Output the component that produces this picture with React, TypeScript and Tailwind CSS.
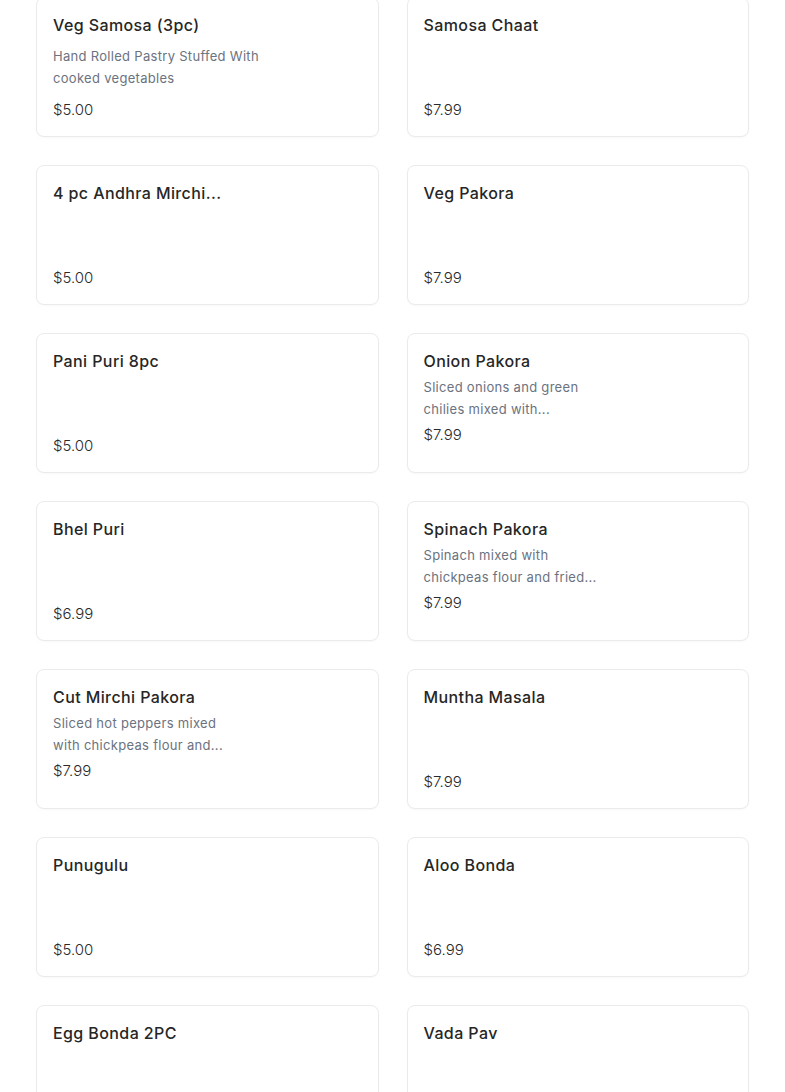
import React from "react";

type Item = {
  title: string;
  price: string;
  desc?: string[];
  kind?: "full" | "clamp";
};

const items: Item[] = [
  { title: "Veg Samosa (3pc)", price: "$5.00", desc: ["Hand Rolled Pastry Stuffed With", "cooked vegetables"], kind: "full" },
  { title: "Samosa Chaat", price: "$7.99" },
  { title: "4 pc Andhra Mirchi...", price: "$5.00" },
  { title: "Veg Pakora", price: "$7.99" },
  { title: "Pani Puri 8pc", price: "$5.00" },
  { title: "Onion Pakora", price: "$7.99", desc: ["Sliced onions and green", "chilies mixed with..."], kind: "clamp" },
  { title: "Bhel Puri", price: "$6.99" },
  { title: "Spinach Pakora", price: "$7.99", desc: ["Spinach mixed with", "chickpeas flour and fried..."], kind: "clamp" },
  { title: "Cut Mirchi Pakora", price: "$7.99", desc: ["Sliced hot peppers mixed", "with chickpeas flour and..."], kind: "clamp" },
  { title: "Muntha Masala", price: "$7.99" },
  { title: "Punugulu", price: "$5.00" },
  { title: "Aloo Bonda", price: "$6.99" },
  { title: "Egg Bonda 2PC", price: "$5.00" },
  { title: "Vada Pav", price: "$5.00" },
];

function Card({ item }: { item: Item }) {
  return (
    <div className="flex h-[140px] flex-col rounded-[8px] border border-[#ebebeb] bg-white px-[16px] pt-[15px] shadow-[0_1px_2px_rgba(0,0,0,0.03)]">
      <div className="text-[16px] font-medium leading-[24px] tracking-[0.4px] text-[#262626]">{item.title}</div>
      {item.desc ? (
        <div
          className={
            item.kind === "full"
              ? "mb-[9px] mt-[8px] text-[13px] leading-[22px] tracking-[0.3px] text-[#6b7280]"
              : "mb-[3px] mt-[3px] text-[13px] leading-[22px] tracking-[0.3px] text-[#6b7280]"
          }
        >
          {item.desc.map((l, i) => (
            <div key={i} className="whitespace-nowrap">
              {l}
            </div>
          ))}
        </div>
      ) : (
        <div className="h-[61px]" />
      )}
      <div className="text-[15px] font-light leading-[24px] text-[#2a2a2a]">{item.price}</div>
    </div>
  );
}

export default function App() {
  return (
    <div
      className="min-h-screen bg-white"
      style={{ fontFamily: "Inter, 'Noto Sans', sans-serif" }}
    >
      <div className="mt-[-3px] grid grid-cols-2 gap-[28px] px-[36px]">
        {items.map((it, i) => (
          <Card key={i} item={it} />
        ))}
      </div>
    </div>
  );
}
